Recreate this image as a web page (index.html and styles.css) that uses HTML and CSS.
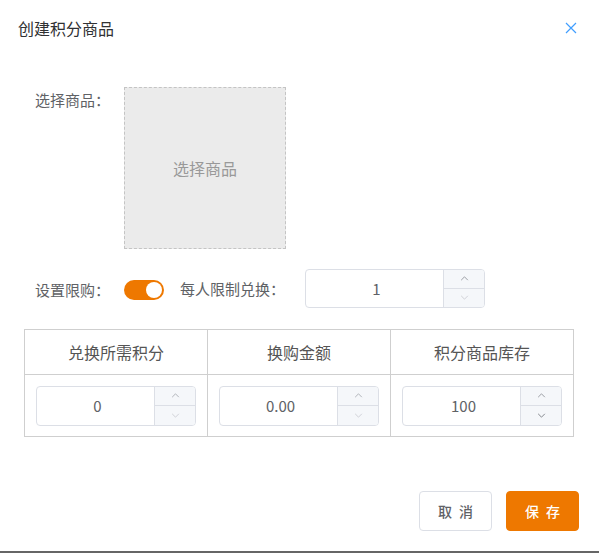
FILE: index.html
```html
<!DOCTYPE html>
<html lang="zh">
<head>
<meta charset="utf-8">
<title>创建积分商品</title>
<link rel="stylesheet" href="styles.css">
</head>
<body>
<div class="dialog">
  <div class="dialog-header">
    <span class="dialog-title">创建积分商品</span>
    <button class="close-btn" aria-label="关闭">
      <svg width="12" height="12" viewBox="0 0 12 12"><path d="M1 1L11 11M11 1L1 11" stroke="#409eff" stroke-width="1.2" fill="none"/></svg>
    </button>
  </div>
  <div class="dialog-body">
    <div class="form-row row-goods">
      <label class="form-label">选择商品：</label>
      <div class="goods-picker">选择商品</div>
    </div>
    <div class="form-row row-limit">
      <label class="form-label">设置限购：</label>
      <div class="switch"><span class="switch-knob"></span></div>
      <span class="inline-label">每人限制兑换：</span>
      <div class="input-number">
        <div class="in-value">1</div>
        <div class="in-spin">
          <span class="spin-btn up"><svg viewBox="0 0 10 6"><path d="M1 5L5 1L9 5"/></svg></span>
          <span class="spin-btn down disabled"><svg viewBox="0 0 10 6"><path d="M1 1L5 5L9 1"/></svg></span>
        </div>
      </div>
    </div>
    <table class="points-table">
      <thead>
        <tr><th>兑换所需积分</th><th>换购金额</th><th>积分商品库存</th></tr>
      </thead>
      <tbody>
        <tr>
          <td>
            <div class="input-number cell-input">
              <div class="in-value">0</div>
              <div class="in-spin">
                <span class="spin-btn up light"><svg viewBox="0 0 10 6"><path d="M1 5L5 1L9 5"/></svg></span>
                <span class="spin-btn down disabled"><svg viewBox="0 0 10 6"><path d="M1 1L5 5L9 1"/></svg></span>
              </div>
            </div>
          </td>
          <td>
            <div class="input-number cell-input">
              <div class="in-value">0.00</div>
              <div class="in-spin">
                <span class="spin-btn up light"><svg viewBox="0 0 10 6"><path d="M1 5L5 1L9 5"/></svg></span>
                <span class="spin-btn down disabled"><svg viewBox="0 0 10 6"><path d="M1 1L5 5L9 1"/></svg></span>
              </div>
            </div>
          </td>
          <td>
            <div class="input-number cell-input">
              <div class="in-value">100</div>
              <div class="in-spin">
                <span class="spin-btn up"><svg viewBox="0 0 10 6"><path d="M1 5L5 1L9 5"/></svg></span>
                <span class="spin-btn down dark"><svg viewBox="0 0 10 6"><path d="M1 1L5 5L9 1"/></svg></span>
              </div>
            </div>
          </td>
        </tr>
      </tbody>
    </table>
  </div>
  <div class="dialog-footer">
    <button class="btn btn-default">取 消</button>
    <button class="btn btn-primary">保 存</button>
  </div>
</div>
</body>
</html>
```
FILE: styles.css
```css
* { box-sizing: border-box; }
html, body {
  margin: 0;
  padding: 0;
  background: #fff;
  font-family: "Noto Sans CJK SC", "Noto Sans", sans-serif;
  color: #606266;
}
.dialog {
  width: 599px;
  height: 553px;
  border-bottom: 2px solid #666;
  display: flex;
  flex-direction: column;
  background: #fff;
}
.dialog-header {
  display: flex;
  align-items: center;
  justify-content: space-between;
  padding: 15px 22px 0 18px;
  height: 40px;
}
.dialog-title {
  font-size: 16px;
  line-height: 24px;
  color: #303133;
}
.close-btn {
  border: 0;
  background: none;
  padding: 0;
  width: 12px;
  height: 12px;
  display: flex;
  cursor: pointer;
}
.close-btn svg { display: block; }
.dialog-body {
  padding: 47px 25px 0 24px;
  flex: 1;
}
.form-row {
  display: flex;
}
.form-label {
  width: 100px;
  padding-right: 14px;
  text-align: right;
  font-size: 15px;
  color: #606266;
  flex-shrink: 0;
}
.row-goods .form-label { line-height: 26px; }
.goods-picker {
  width: 162px;
  height: 162px;
  background: #ebebeb;
  border: 1px dashed #c4c4c4;
  display: flex;
  align-items: center;
  justify-content: center;
  font-size: 16px;
  color: #999;
}
.row-limit {
  margin-top: 20px;
  align-items: center;
  height: 38px;
}
.row-limit .form-label { line-height: 38px; padding-top: 3px; }
.switch {
  width: 40px;
  height: 20px;
  border-radius: 10px;
  background: #ee7800;
  position: relative;
  margin-top: 3px;
}
.switch-knob {
  position: absolute;
  top: 2px;
  right: 2px;
  width: 16px;
  height: 16px;
  border-radius: 50%;
  background: #fff;
}
.inline-label {
  margin-left: 16px;
  width: 125px;
  font-size: 15px;
  color: #606266;
}
.input-number {
  width: 180px;
  height: 39px;
  border: 1px solid #dcdfe6;
  border-radius: 4px;
  display: flex;
  background: #fff;
  overflow: hidden;
}
.in-value {
  flex: 1;
  display: flex;
  align-items: center;
  justify-content: center;
  font-size: 15px;
  color: #606266;
  padding-left: 4px;
}
.in-spin {
  width: 41px;
  border-left: 1px solid #dcdfe6;
  display: flex;
  flex-direction: column;
  background: #f5f7fa;
}
.spin-btn {
  flex: 1;
  display: flex;
  align-items: center;
  justify-content: center;
}
.spin-btn + .spin-btn { border-top: 1px solid #dcdfe6; }
.spin-btn svg {
  width: 9px;
  height: 5px;
  fill: none;
  stroke: #8a8d94;
  stroke-width: 1;
}
.spin-btn.light svg { stroke: #a3a6ad; }
.spin-btn.disabled svg { stroke: #c8cad0; }
.spin-btn.dark svg { stroke: #6f7278; }
.points-table {
  margin-top: 22px;
  width: 550px;
  border-collapse: collapse;
  table-layout: fixed;
}
.points-table th,
.points-table td {
  border: 1px solid #cfcfcf;
  text-align: center;
}
.points-table th {
  height: 45px;
  font-size: 16px;
  font-weight: normal;
  color: #555;
}
.points-table td {
  height: 62px;
  padding: 0 11px;
}
.cell-input {
  width: 100%;
  height: 40px;
}
.dialog-footer {
  display: flex;
  justify-content: flex-end;
  gap: 14px;
  padding: 0 20px 20px 0;
}
.btn {
  width: 73px;
  height: 40px;
  border-radius: 4px;
  font-family: "Noto Sans CJK SC", sans-serif;
  font-size: 14px;
  font-weight: 500;
  letter-spacing: 2px;
  padding: 0 0 0 2px;
  cursor: pointer;
}
.btn-default {
  background: #fff;
  border: 1px solid #dcdfe6;
  color: #606266;
}
.btn-primary {
  background: #ee7800;
  border: 1px solid #ee7800;
  color: #fff;
}
```
